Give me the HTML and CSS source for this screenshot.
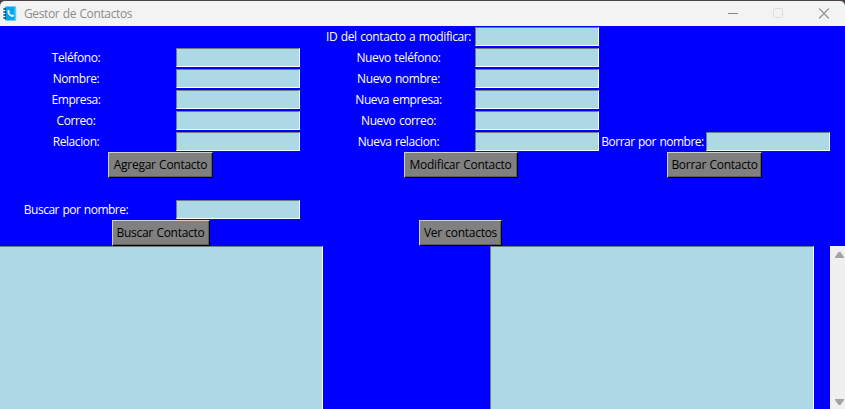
FILE: index.html
```html
<!DOCTYPE html>
<html lang="es">
<head>
<meta charset="utf-8">
<title>Gestor de Contactos</title>
<link rel="stylesheet" href="styles.css">
</head>
<body>
<div class="window">
  <header class="titlebar">
    <svg class="app-icon" width="14" height="15" viewBox="0 0 14 15">
      <rect x="2" y="0.5" width="11" height="14" rx="1" fill="#09a5e8"/>
      <rect x="11.5" y="0.5" width="1.7" height="14" fill="#45d3ff"/>
      <path d="M0.4 3h2.6M0.4 6h2.6M0.4 9h2.6M0.4 12h2.6" stroke="#123c5c" stroke-width="1.5"/>
      <path d="M4.5 4.3 5.9 3.9 7 5.8 6.2 6.8Q6.9 8.3 8.3 9L9.3 8.2 11 9.3 10.4 10.8Q8.6 11.5 6.2 9.2 4 6.8 4.5 4.3Z" fill="#fff"/>
    </svg>
    <h1 class="title">Gestor de Contactos</h1>
    <svg class="controls" width="104" height="12" viewBox="0 0 104 12" fill="none">
      <path d="M0 5.500h10" stroke="#858585"/>
      <rect x="45.500" y="0.500" width="9" height="9" rx="1" stroke="#dddddd"/>
      <path d="M91.200 0.700l9.600 9.600M100.800 0.700l-9.600 9.600" stroke="#858585" stroke-width="1.100"/>
    </svg>
  </header>
  <main class="form">
    <label class="c3 r1">ID del contacto a modificar:</label><input class="c4 r1">
    <label class="c1 r2">Teléfono:</label><input class="c2 r2">
    <label class="c3 r2">Nuevo teléfono:</label><input class="c4 r2">
    <label class="c1 r3">Nombre:</label><input class="c2 r3">
    <label class="c3 r3">Nuevo nombre:</label><input class="c4 r3">
    <label class="c1 r4">Empresa:</label><input class="c2 r4">
    <label class="c3 r4">Nueva empresa:</label><input class="c4 r4">
    <label class="c1 r5">Correo:</label><input class="c2 r5">
    <label class="c3 r5">Nuevo correo:</label><input class="c4 r5">
    <label class="c1 r6">Relacion:</label><input class="c2 r6">
    <label class="c3 r6">Nueva relacion:</label><input class="c4 r6">
    <label class="c5 r6 tight">Borrar por nombre:</label><input class="c6 r6">
    <button class="left r7 add">Agregar Contacto</button>
    <button class="middle r7 edit">Modificar Contacto</button>
    <button class="right r7 remove">Borrar Contacto</button>
    <label class="c1 r9 tight">Buscar por nombre:</label><input class="c2 r9">
    <button class="left r10 search">Buscar Contacto</button>
    <button class="middle r10 view">Ver contactos</button>
  </main>
  <section class="results">
    <div class="output"></div>
    <div class="output"></div>
    <div class="scrollbar">
      <svg width="9" height="6" viewBox="0 0 9 6"><path d="M3.500 0h2L9 5v1H0V5Z" fill="#a3a3a3"/></svg>
      <svg width="9" height="6" viewBox="0 0 9 6"><path d="M3.500 6h2L9 1V0H0v1Z" fill="#a3a3a3"/></svg>
    </div>
  </section>
</div>
</body>
</html>
```
FILE: styles.css
```css
* { box-sizing: border-box; }
body { margin: 0; background: #494349; font: 12px/16px "Open Sans", "Noto Sans", sans-serif; }
.window { display: flex; flex-direction: column; height: 409px; padding-top: 1px; overflow: hidden; }
.titlebar { display: flex; align-items: center; flex: 0 0 25px; padding-left: 3px; background: #f3f3f3; border-radius: 5px 5px 0 0; }
.title { flex: 1; margin: 0 0 0 7px; font-size: 12px; font-weight: 400; letter-spacing: -0.37px; word-spacing: 0.6px; color: #8c8c8c; }
.controls { margin-right: 13px; }
.form {
  display: grid;
  grid-template-columns: 152px 171px 151px 126px 105px 126px;
  grid-template-rows: repeat(6, 21px) 26px 21px 21px 26px;
  place-items: center;
  flex: 0 0 220px;
  background: #00f;
}
label { color: #fff; white-space: nowrap; letter-spacing: -0.4px; word-spacing: 0.8px; }
.tight { letter-spacing: -0.5px; }
input {
  width: 124px; height: 19px; margin: 0; padding: 0 2px; border-radius: 0;
  background: #add8e6; border: 1px solid; border-color: #737b7e #fff #fff #737b7e;
}
button {
  height: 26px; margin: 0 2px 0 0; padding: 0; border: 1px solid; border-color: #d0d0d0 #000 #000 #d0d0d0; border-radius: 0;
  box-shadow: inset -1px -1px #5c5c5c;
  background: #808080; color: #000; font: inherit; letter-spacing: -0.28px; word-spacing: 0.6px; white-space: nowrap;
}
.add { width: 105px; }
.edit { width: 114px; }
.remove { width: 95px; }
.search { width: 98px; }
.view { width: 83px; }
.c1 { grid-column: 1; }
.c2 { grid-column: 2; }
.c3 { grid-column: 3; }
.c4 { grid-column: 4; }
.c5 { grid-column: 5; }
.c6 { grid-column: 6; }
.left { grid-column: 1 / 3; }
.middle { grid-column: 3 / 5; }
.right { grid-column: 5 / 7; }
.r1 { grid-row: 1; }
.r2 { grid-row: 2; }
.r3 { grid-row: 3; }
.r4 { grid-row: 4; }
.r5 { grid-row: 5; }
.r6 { grid-row: 6; }
.r7 { grid-row: 7; }
.r9 { grid-row: 9; }
.r10 { grid-row: 10; }
.results { display: grid; grid-template-columns: 323px 167px 324px 16px 15px; flex: 1; background: #00f; }
.output { border: 1px solid; border-color: #737b7e #fff #fff #737b7e; border-bottom: 0; background: #add8e6; }
.output:first-child { border-left: 0; }
.output:nth-child(2) { grid-column: 3; }
.scrollbar { grid-column: 5; display: flex; flex-direction: column; align-items: center; justify-content: space-between; padding: 6px 0 4px 3px; background: #f0f0f0; }
```
